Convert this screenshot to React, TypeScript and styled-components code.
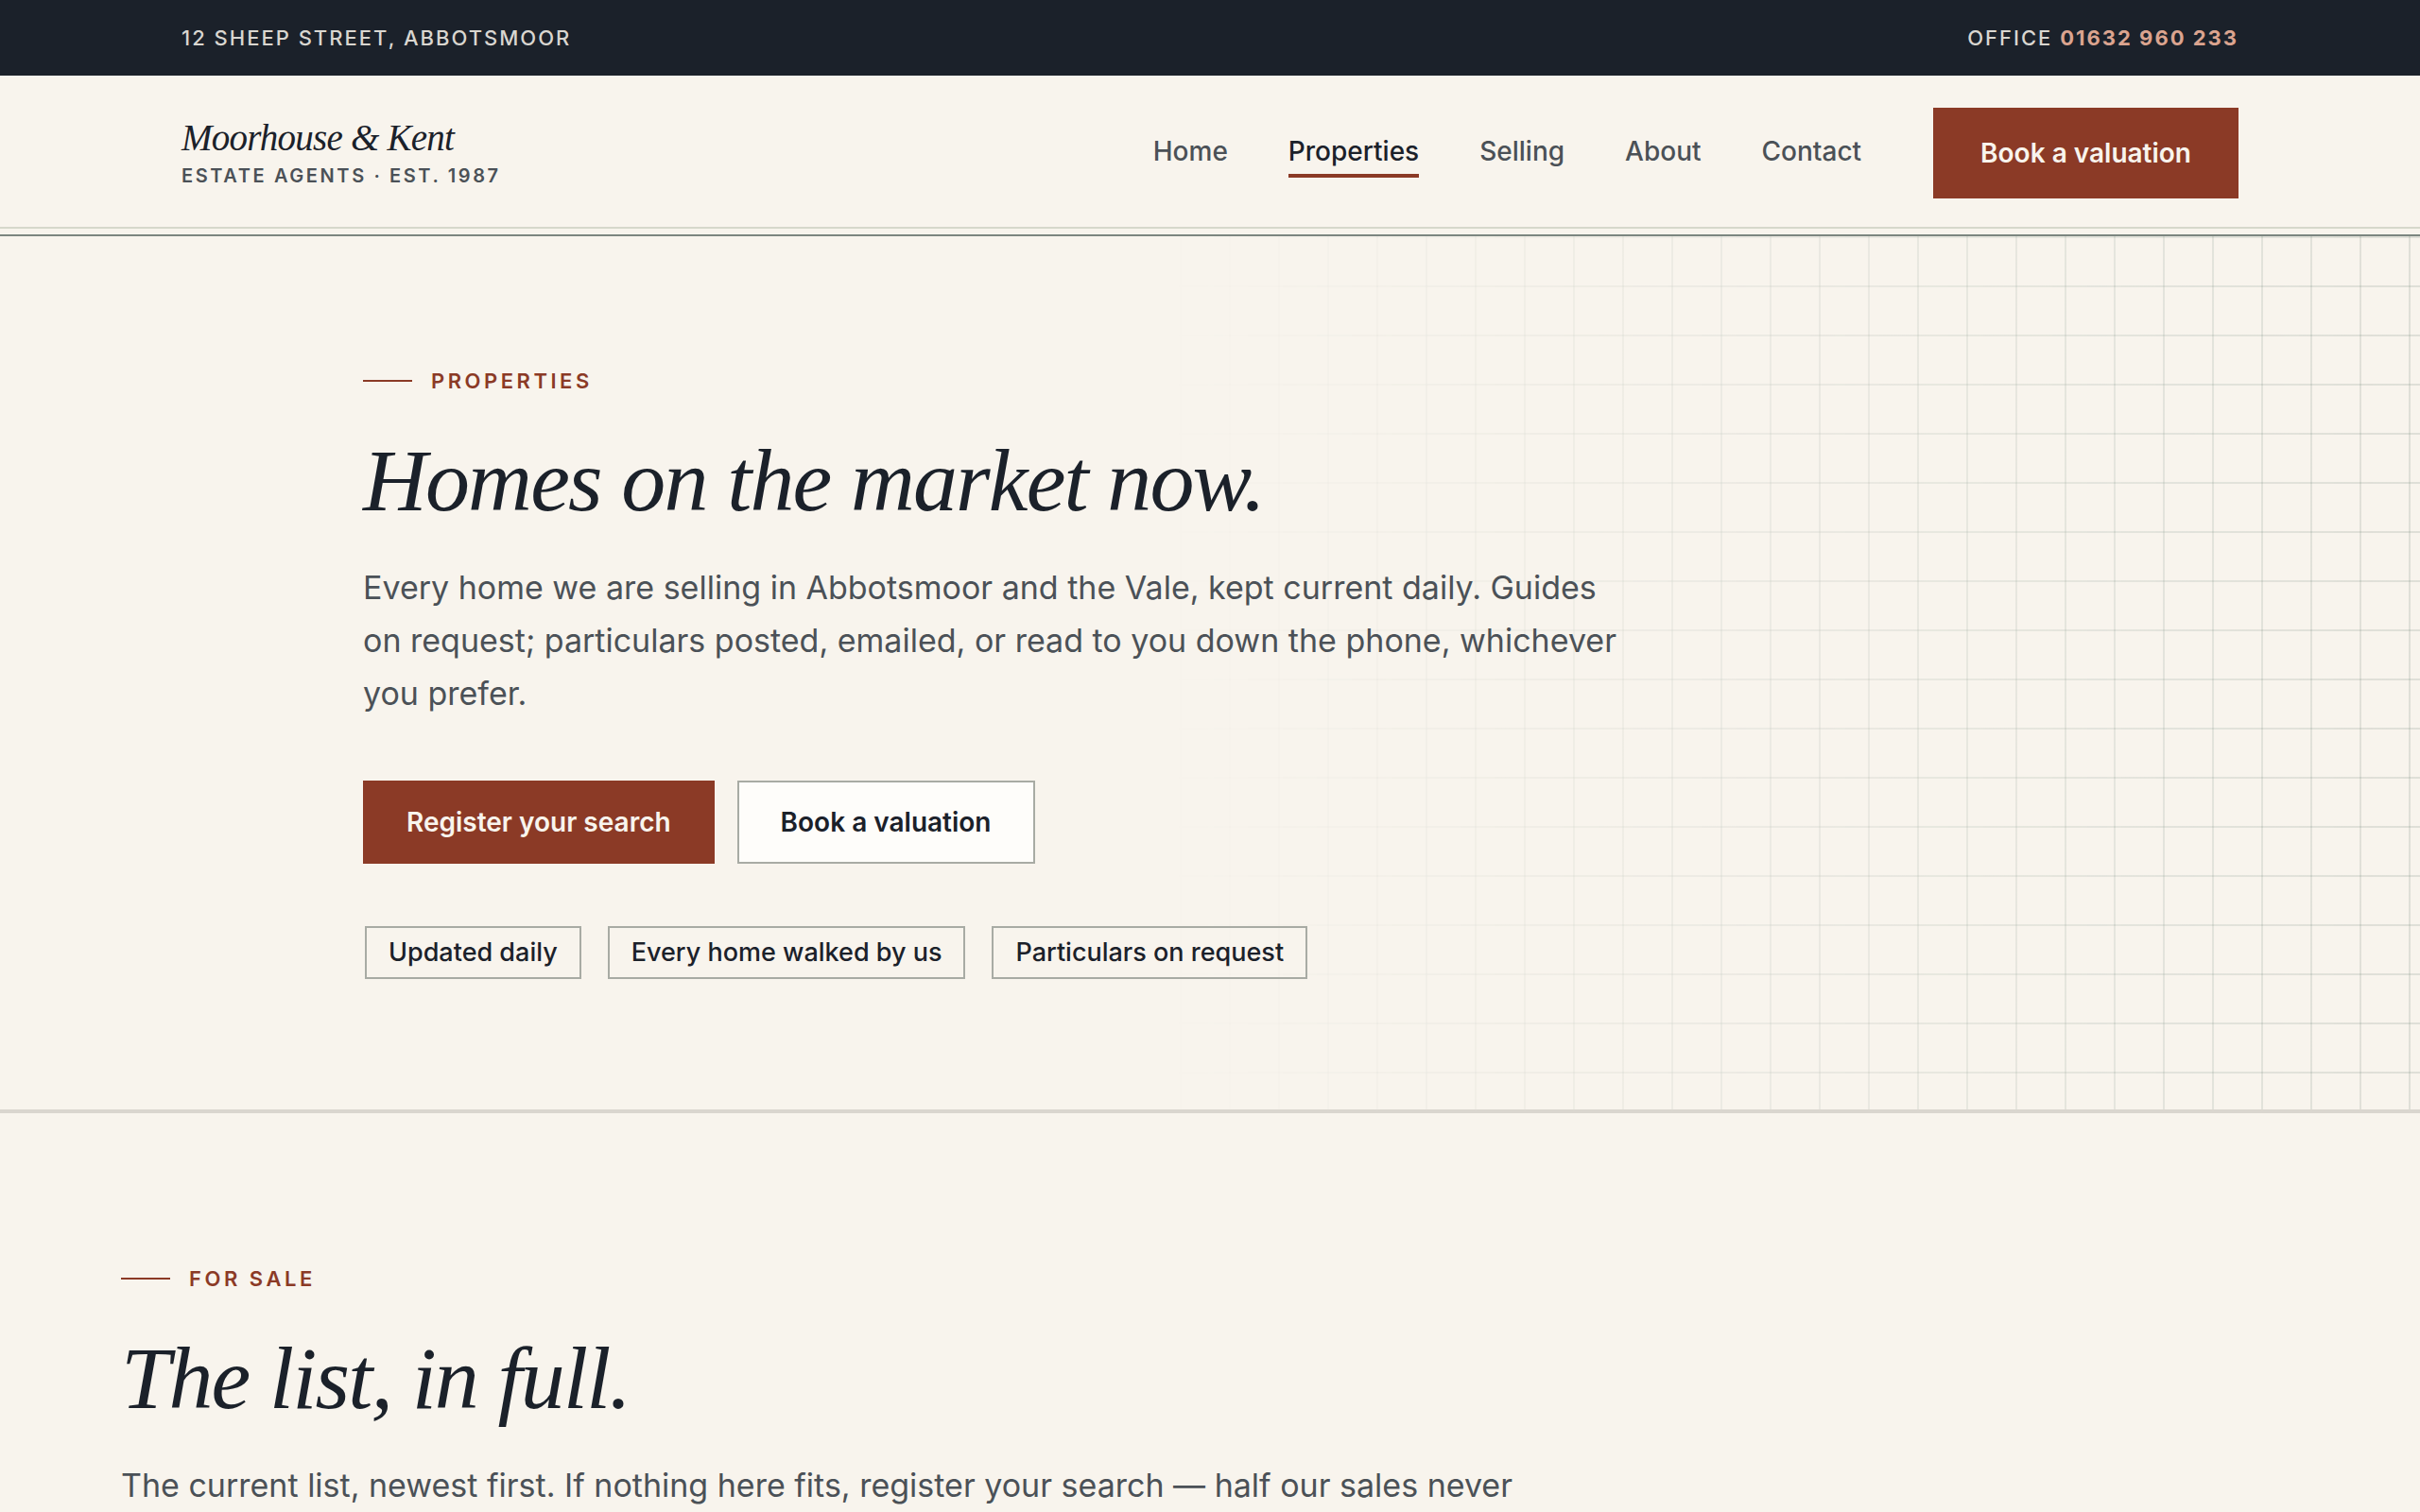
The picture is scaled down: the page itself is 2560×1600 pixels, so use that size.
import React from "react";
import styled, { createGlobalStyle, css } from "styled-components";

const color = {
  paper: "#f8f4ed",
  ink: "#1b212a",
  muted: "#4b5157",
  brick: "#8b3a26",
  clay: "#dba48f",
  mist: "#d9d6d0",
  edge: "#a8aba4",
  rule: "#dad6cf",
};

const sans = `Inter, "Liberation Sans", sans-serif`;
const serif = `"Liberation Serif", "Times New Roman", serif`;

const GlobalStyle = createGlobalStyle`
  *, *::before, *::after { box-sizing: border-box; }
  body {
    margin: 0;
    background: ${color.paper};
    color: ${color.ink};
    font-family: ${sans};
  }
  h1, h2, p, ul { margin: 0; padding: 0; }
  ul { list-style: none; }
  a { color: inherit; text-decoration: none; }
`;

const TopBar = styled.div`
  display: flex;
  align-items: center;
  justify-content: space-between;
  height: 80px;
  padding: 0 192px;
  background: ${color.ink};
  color: ${color.mist};
  font-size: 22px;
  font-weight: 500;
  line-height: 32px;
  letter-spacing: 2px;
  text-transform: uppercase;
`;

const Phone = styled.a`
  color: ${color.clay};
  font-weight: 700;
`;

const Header = styled.header`
  display: flex;
  align-items: center;
  justify-content: space-between;
  padding: 34px 192px 30px;
`;

const DoubleRule = styled.div`
  height: 10px;
  border-top: 2px solid #d6d8cb;
  border-bottom: 2px solid #7c8680;
`;

const Brand = styled.a`
  display: flex;
  flex-direction: column;
  gap: 4px;
`;

const BrandName = styled.span`
  font-family: ${serif};
  font-size: 39px;
  font-style: italic;
  line-height: 44px;
  letter-spacing: -0.02em;
`;

const BrandTag = styled.span`
  color: ${color.muted};
  font-size: 20px;
  font-weight: 600;
  line-height: 28px;
  letter-spacing: 0.13em;
  text-transform: uppercase;
`;

const HeaderEnd = styled.div`
  display: flex;
  align-items: center;
  gap: 76px;
`;

const NavList = styled.ul`
  display: flex;
  gap: 64px;
`;

const NavLink = styled.a<{ $current?: boolean }>`
  display: block;
  border-bottom: 4px solid ${(p) => (p.$current ? color.brick : "transparent")};
  color: ${(p) => (p.$current ? color.ink : color.muted)};
  font-size: 28px;
  font-weight: 500;
  line-height: 48px;
`;

const Button = styled.button<{ $quiet?: boolean; $large?: boolean }>`
  height: ${(p) => (p.$large ? 96 : 88)}px;
  padding: 0 ${(p) => (p.$large ? 48 : 44)}px;
  border: 2px solid ${color.brick};
  border-radius: 0;
  background: ${color.brick};
  color: ${color.paper};
  font-family: ${sans};
  font-size: 28px;
  font-weight: 600;
  line-height: 40px;
  cursor: pointer;
  ${(p) =>
    p.$quiet &&
    css`
      border-color: ${color.edge};
      background: #fefdfa;
      color: ${color.ink};
    `}
`;

const Hero = styled.section`
  position: relative;
  padding: 137px 384px 138px;
  border-bottom: 4px solid ${color.rule};
`;

/* Survey-paper grid that fades in towards the right edge. */
const HeroGrid = styled.div`
  position: absolute;
  inset: 0;
  background-image:
    linear-gradient(to right, rgba(70, 100, 88, 0.14) 2px, transparent 2px),
    linear-gradient(to bottom, rgba(70, 100, 88, 0.14) 2px, transparent 2px);
  background-size: 52px 52px;
  mask-image: linear-gradient(to right, transparent 48%, #000 100%);
  pointer-events: none;
`;

const HeroBody = styled.div`
  position: relative;
`;

const Eyebrow = styled.p`
  display: flex;
  align-items: center;
  gap: 20px;
  color: ${color.brick};
  font-size: 22px;
  font-weight: 600;
  line-height: 32px;
  letter-spacing: 0.16em;
  text-transform: uppercase;

  &::before {
    content: "";
    width: 52px;
    height: 2px;
    background: currentColor;
  }
`;

const Title = styled.h1`
  margin-top: 37px;
  font-family: ${serif};
  font-size: 94px;
  font-style: italic;
  font-weight: 400;
  line-height: 104px;
  letter-spacing: -0.02em;
`;

const Lead = styled.p<{ $measure: number }>`
  max-width: ${(p) => p.$measure}px;
  margin-top: 34px;
  color: ${color.muted};
  font-size: 34px;
  line-height: 56px;
`;

const Actions = styled.div`
  display: flex;
  flex-wrap: wrap;
  gap: 24px;
  margin-top: 64px;
`;

const Chips = styled.ul`
  display: flex;
  flex-wrap: wrap;
  gap: 28px;
  margin-top: 66px;
  && {
    padding: 0 2px;
  }
`;

const Chip = styled.li`
  padding: 0 23px;
  border: 2px solid ${color.edge};
  font-size: 27px;
  font-weight: 500;
  line-height: 52px;
`;

const Listing = styled.section`
  padding: 159px 128px 0;
`;

const links = ["Home", "Properties", "Selling", "About", "Contact"];
const promises = ["Updated daily", "Every home walked by us", "Particulars on request"];

export default function App() {
  return (
    <>
      <GlobalStyle />
      <TopBar>
        <span>12 Sheep Street, Abbotsmoor</span>
        <span>
          Office <Phone href="tel:01632960233">01632 960 233</Phone>
        </span>
      </TopBar>
      <Header>
        <Brand href="#home">
          <BrandName>Moorhouse &amp; Kent</BrandName>
          <BrandTag>Estate agents · Est. 1987</BrandTag>
        </Brand>
        <HeaderEnd>
          <nav>
            <NavList>
              {links.map((label) => {
                const current = label === "Properties";
                return (
                  <li key={label}>
                    <NavLink
                      href={`#${label.toLowerCase()}`}
                      $current={current}
                      aria-current={current ? "page" : undefined}
                    >
                      {label}
                    </NavLink>
                  </li>
                );
              })}
            </NavList>
          </nav>
          <Button type="button" $large>
            Book a valuation
          </Button>
        </HeaderEnd>
      </Header>
      <DoubleRule />
      <main>
        <Hero>
          <HeroGrid />
          <HeroBody>
            <Eyebrow>Properties</Eyebrow>
            <Title>Homes on the market now.</Title>
            <Lead $measure={1344}>
              Every home we are selling in Abbotsmoor and the Vale, kept current daily. Guides on
              request; particulars posted, emailed, or read to you down the phone, whichever you
              prefer.
            </Lead>
            <Actions>
              <Button type="button">Register your search</Button>
              <Button type="button" $quiet>
                Book a valuation
              </Button>
            </Actions>
            <Chips>
              {promises.map((text) => (
                <Chip key={text}>{text}</Chip>
              ))}
            </Chips>
          </HeroBody>
        </Hero>
        <Listing>
          <Eyebrow>For sale</Eyebrow>
          <Title as="h2">The list, in full.</Title>
          <Lead $measure={1536}>
            The current list, newest first. If nothing here fits, register your search — half our
            sales never
          </Lead>
        </Listing>
      </main>
    </>
  );
}
